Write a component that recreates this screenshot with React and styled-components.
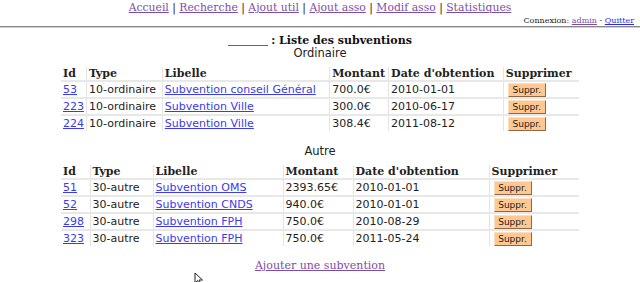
import React from 'react'
import styled, { createGlobalStyle } from 'styled-components'

const GlobalStyle = createGlobalStyle`
  html, body {
    margin: 0;
    padding: 0;
    background: #fff;
  }
  body {
    font-family: "DejaVu Serif", serif;
    color: #111;
  }
`

const ordinaire = [
  { id: 53, type: '10-ordinaire', lib: 'Subvention conseil Général', mt: '700.0€', date: '2010-01-01' },
  { id: 223, type: '10-ordinaire', lib: 'Subvention Ville', mt: '300.0€', date: '2010-06-17' },
  { id: 224, type: '10-ordinaire', lib: 'Subvention Ville', mt: '308.4€', date: '2011-08-12' },
]

const autre = [
  { id: 51, type: '30-autre', lib: 'Subvention OMS', mt: '2393.65€', date: '2010-01-01' },
  { id: 52, type: '30-autre', lib: 'Subvention CNDS', mt: '940.0€', date: '2010-01-01' },
  { id: 298, type: '30-autre', lib: 'Subvention FPH', mt: '750.0€', date: '2010-08-29' },
  { id: 323, type: '30-autre', lib: 'Subvention FPH', mt: '750.0€', date: '2011-05-24' },
]

const navItems = ['Accueil', 'Recherche', 'Ajout util', 'Ajout asso', 'Modif asso', 'Statistiques']

function SubTable({ title, rows, cols }) {
  return (
    <Table>
      <Caption>{title}</Caption>
      <colgroup>
        {cols.map((w, i) => <Col key={i} $w={w} />)}
      </colgroup>
      <thead>
        <tr>
          <Th>Id</Th>
          <Th>Type</Th>
          <Th>Libelle</Th>
          <Th>Montant</Th>
          <Th>Date d'obtention</Th>
          <Th>Supprimer</Th>
        </tr>
      </thead>
      <tbody>
        {rows.map(r => (
          <Tr key={r.id}>
            <Td><CellLink href="#">{r.id}</CellLink></Td>
            <Td>{r.type}</Td>
            <Td><CellLink href="#">{r.lib}</CellLink></Td>
            <Td>{r.mt}</Td>
            <Td>{r.date}</Td>
            <Td><DelButton>Suppr.</DelButton></Td>
          </Tr>
        ))}
      </tbody>
    </Table>
  )
}

export default function App() {
  return (
    <Page>
      <GlobalStyle />
      <Nav>
        {navItems.map((n, i) => (
          <React.Fragment key={n}>
            {i > 0 && ' | '}
            <NavLink href="#">{n}</NavLink>
          </React.Fragment>
        ))}
      </Nav>
      <Login>
        Connexion: <VisitedLink href="#">admin</VisitedLink> - <BlueLink href="#">Quitter</BlueLink>
      </Login>
      <Rule />
      <Title>
        <BlankLink href="#" />
        : Liste des subventions
      </Title>
      <SubTable title="Ordinaire" rows={ordinaire} cols={[24, 76, 168, 59, 115, 76]} />
      <Spacer />
      <SubTable title="Autre" rows={autre} cols={[29, 63, 130, 70, 136, 90]} />
      <Footer>
        <VisitedLink href="#">Ajouter une subvention</VisitedLink>
      </Footer>
      <Cursor width="12" height="14" viewBox="0 0 12 14">
        <path d="M1 1 L1 11 L3.5 8.5 L5.5 12.5 L7 11.8 L5 8 L8.5 8 Z" fill="#fff" stroke="#222" strokeWidth="1" />
      </Cursor>
    </Page>
  )
}

const Page = styled.div`
  position: relative;
  width: 640px;
  height: 282px;
  overflow: hidden;
`

const Nav = styled.div`
  text-align: center;
  font-size: 10.8px;
  line-height: 16px;
  color: #222;
`

const NavLink = styled.a`
  color: #7d4ea8;
`

const Login = styled.div`
  text-align: right;
  font-size: 8px;
  line-height: 10px;
  padding-right: 6px;
  color: #222;
`

const VisitedLink = styled.a`
  color: #7d4ea8;
`

const BlueLink = styled.a`
  color: #2a2aee;
`

const Rule = styled.hr`
  margin: 0 0 6px;
  border: none;
  border-top: 1px solid #8a8a8a;
  border-bottom: 1px solid #cfcfcf;
  height: 0;
`

const Title = styled.div`
  text-align: center;
  font-weight: bold;
  font-size: 11px;
  line-height: 13px;
`

const BlankLink = styled.a`
  display: inline-block;
  width: 40px;
  height: 11px;
  margin-right: 3px;
  border-bottom: 1px solid #7d4ea8;
  vertical-align: -2px;
`

const Table = styled.table`
  width: 518px;
  margin: 0 auto;
  border-collapse: collapse;
  font-family: "DejaVu Sans", sans-serif;
  font-size: 11px;
  color: #222;
`

const Caption = styled.caption`
  font-family: "DejaVu Sans", sans-serif;
  font-size: 11.5px;
  line-height: 13px;
  padding-bottom: 7px;
  color: #222;
`

const Col = styled.col`
  width: ${p => p.$w}px;
`

const Th = styled.th`
  text-align: left;
  font-family: "DejaVu Serif", serif;
  font-weight: bold;
  font-size: 11px;
  line-height: 13px;
  height: 13px;
  padding: 0 2px;
  white-space: nowrap;
  & + & {
    border-left: 1px solid #e4e4e4;
  }
`

const Tr = styled.tr`
  & > td {
    border-top: 2px solid #e8e8e8;
  }
`

const Td = styled.td`
  padding: 0 2px;
  height: 15px;
  line-height: 15px;
  white-space: nowrap;
  & + & {
    border-left: 1px solid #e4e4e4;
  }
`

const CellLink = styled.a`
  color: #3a3af0;
`

const DelButton = styled.button`
  font-family: "DejaVu Sans", sans-serif;
  font-size: 9px;
  line-height: 10px;
  height: 14px;
  width: 38px;
  padding: 0;
  margin: 1px 0 0 2px;
  background: #ffc890;
  color: #222;
  border: 1px solid;
  border-color: #fbe0c0 #8c6a48 #8c6a48 #fbe0c0;
  vertical-align: top;
`

const Spacer = styled.div`
  height: 14px;
`

const Footer = styled.div`
  text-align: center;
  font-size: 11px;
  line-height: 14px;
  margin-top: 13px;
`

const Cursor = styled.svg`
  position: absolute;
  left: 194px;
  top: 272px;
`
